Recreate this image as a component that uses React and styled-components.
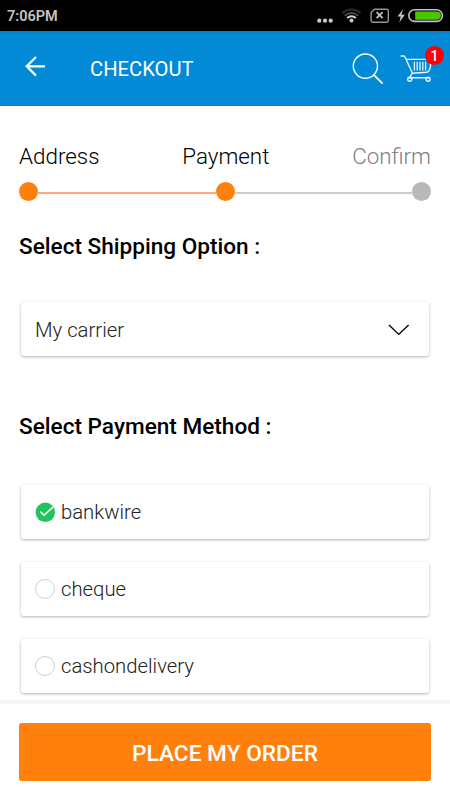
import React, { useState } from 'react';
import styled, { createGlobalStyle } from 'styled-components';

const steps = [
  { label: 'Address', reached: true },
  { label: 'Payment', reached: true },
  { label: 'Confirm', reached: false },
];

const methods = ['bankwire', 'cheque', 'cashondelivery'];

const StatusIcons = () => (
  <svg width="132" height="31" viewBox="312 0 132 31" fill="none">
    <g fill="#c8c8c8">
      <circle cx="319.3" cy="20.7" r="2.1" />
      <circle cx="325" cy="20.7" r="2.1" />
      <circle cx="330.7" cy="20.7" r="2.1" />
      <circle cx="351.5" cy="20.4" r="2" />
    </g>
    <path d="M342.4 13.2a13 13 0 0 1 18.2 0" stroke="#2c2c2c" strokeWidth="2.2" />
    <path d="M344.8 15.8a9.5 9.5 0 0 1 13.4 0" stroke="#484848" strokeWidth="2" />
    <path d="M347.2 18a6 6 0 0 1 8.6 0" stroke="#d0d0d0" strokeWidth="2" />
    <path
      d="M374.5 9.2h12.2a1.6 1.6 0 0 1 1.6 1.6v9.8a1.6 1.6 0 0 1-1.6 1.6h-14a1.6 1.6 0 0 1-1.6-1.6v-8z"
      stroke="#969696"
      strokeWidth="1.4"
    />
    <path d="M376.6 12.2l6 6M382.6 12.2l-6 6" stroke="#c0c0c0" strokeWidth="1.8" />
    <path d="M403 9.3l-5.5 7.3h3.2l-1.4 5.9 5.5-7.8h-3.4z" fill="#c4c4c4" />
    <rect x="408.8" y="9.8" width="33.6" height="11.6" rx="5.8" stroke="#c0c0c0" strokeWidth="1.6" />
    <path d="M415.2 11.5h21.6a4.1 4.1 0 0 1 0 8.2h-21.6z" fill="#4cc400" />
  </svg>
);

const BackIcon = () => (
  <svg width="24" height="24" viewBox="0 0 24 24" fill="none" stroke="#fff" strokeWidth="2.2">
    <path d="M22 12.3H3.6M13 3L3.7 12.3L13 21.6" />
  </svg>
);

const SearchIcon = () => (
  <svg width="32" height="32" viewBox="0 0 32 32" fill="none" stroke="#fff" strokeWidth="1.4">
    <circle cx="13.4" cy="13.1" r="12.1" />
    <path d="M21.8 21.8L30.6 30.6" strokeWidth="1.7" />
  </svg>
);

const CartIcon = () => (
  <svg width="34" height="32" viewBox="0 0 34 32" fill="none" stroke="#e8f4fc" strokeWidth="1.4">
    <path d="M0.6 3h2.9q1 0 1.5 1l7.4 16.2-2.9 4.6h20.6M5.9 6.4h24.6v7l-1.6 4.6-2 1.2-14.6 1" />
    <path d="M14.4 8.8v8.8M17.2 8.8v8.8M20 8.8v8.8M22.8 8.8v8.8M25.6 8.8v8.8" strokeWidth="1.3" />
    <circle cx="9.7" cy="26.3" r="2" />
    <circle cx="28.1" cy="26.3" r="2" />
  </svg>
);

const ChevronIcon = () => (
  <svg width="22" height="12" viewBox="0 0 22 12" fill="none" stroke="#000" strokeWidth="1.4">
    <path d="M1 1L10.8 10.4L20.6 1" />
  </svg>
);

const CheckIcon = () => (
  <svg width="20" height="20" viewBox="0 0 20 20" fill="none">
    <circle cx="10.3" cy="10.3" r="9.7" fill="#22c35e" />
    <path d="M5.4 9.6L9 13.2L18.2 4.9" stroke="#fff" strokeWidth="1.5" />
  </svg>
);

const App = () => {
  const [selected, setSelected] = useState('bankwire');

  return (
    <Screen>
      <GlobalStyle />
      <StatusBar>
        <Clock>7:06PM</Clock>
        <StatusIcons />
      </StatusBar>
      <AppBar>
        <BackButton aria-label="Back"><BackIcon /></BackButton>
        <Title>CHECKOUT</Title>
        <IconButton aria-label="Search"><SearchIcon /></IconButton>
        <CartButton aria-label="Cart">
          <CartIcon />
          <Badge>1</Badge>
        </CartButton>
      </AppBar>
      <Content>
        <StepLabels>
          {steps.map((step) => (
            <StepLabel key={step.label} $reached={step.reached}>{step.label}</StepLabel>
          ))}
        </StepLabels>
        <StepTrack>
          <Dot $reached />
          <Line $reached />
          <Dot $reached />
          <Line />
          <Dot />
        </StepTrack>
        <Heading>Select Shipping Option :</Heading>
        <CarrierSelect>
          <span>My carrier</span>
          <ChevronIcon />
        </CarrierSelect>
        <Heading $payment>Select Payment Method :</Heading>
        <MethodList>
          {methods.map((name) => (
            <Method key={name} onClick={() => setSelected(name)}>
              {selected === name ? <CheckIcon /> : <Radio />}
              <span>{name}</span>
            </Method>
          ))}
        </MethodList>
      </Content>
      <Footer>
        <OrderButton>PLACE MY ORDER</OrderButton>
      </Footer>
    </Screen>
  );
};

const GlobalStyle = createGlobalStyle`
  * {
    box-sizing: border-box;
  }
  body {
    margin: 0;
    font-family: Roboto, "Liberation Sans", sans-serif;
  }
  button {
    font-family: inherit;
  }
  svg {
    display: block;
    flex-shrink: 0;
  }
`;

const Screen = styled.div`
  display: flex;
  flex-direction: column;
  width: 450px;
  height: 800px;
  overflow: hidden;
  background: #fff;
`;

const StatusBar = styled.div`
  display: flex;
  align-items: center;
  justify-content: space-between;
  height: 31px;
  padding: 0 6px 0 7px;
  background: #000;
`;

const Clock = styled.span`
  padding-top: 2px;
  font-size: 14.5px;
  font-weight: 600;
  line-height: 29px;
  color: #c4c4c4;
`;

const AppBar = styled.header`
  display: flex;
  align-items: flex-start;
  height: 75px;
  padding: 22px 16px 0 23px;
  background: linear-gradient(#0580c8, #028ad7 4px);
  border-bottom: 1px solid #0580c8;
`;

const IconButton = styled.button`
  padding: 0;
  border: none;
  background: none;
  cursor: pointer;
`;

const BackButton = styled(IconButton)`
  margin-top: 1px;
`;

const Title = styled.h1`
  flex: 1;
  margin: 4px 0 0 43px;
  font-size: 20.2px;
  font-weight: 400;
  line-height: 24px;
  color: #fff;
`;

const CartButton = styled(IconButton)`
  position: relative;
  margin-left: 16px;
`;

const Badge = styled.span`
  position: absolute;
  top: -7px;
  right: -10px;
  width: 19px;
  height: 19px;
  border-radius: 50%;
  background: #fb0007;
  color: #fff;
  font-size: 14px;
  font-weight: 500;
  line-height: 20px;
  text-align: center;
`;

const Content = styled.main`
  height: 594px;
  padding: 36px 19px 0;
`;

const StepLabels = styled.div`
  display: flex;
  justify-content: space-between;
`;

const StepLabel = styled.span`
  font-size: 22.4px;
  font-weight: 300;
  line-height: 28px;
  color: ${(props) => (props.$reached ? '#000' : '#808080')};
`;

const StepTrack = styled.div`
  display: flex;
  align-items: center;
  margin-top: 12px;
`;

const Dot = styled.span`
  width: 19px;
  height: 19px;
  border-radius: 50%;
  background: ${(props) => (props.$reached ? '#ff800d' : '#b9b9b9')};
`;

const Line = styled.span`
  flex: 1;
  height: 2px;
  margin-top: 2px;
  background: ${(props) => (props.$reached ? '#ffa883' : '#cdcdcd')};
`;

const Heading = styled.h2`
  margin: ${(props) => (props.$payment ? '57px' : '32px')} 0 0;
  font-size: 22.6px;
  font-weight: 500;
  line-height: 28px;
  color: #000;
`;

const Card = styled.div`
  display: flex;
  align-items: center;
  height: 54px;
  margin: 0 2px;
  padding: 0 14px;
  border-radius: 3px;
  background: #fff;
  box-shadow: 0 1px 3px rgba(0, 0, 0, 0.3);
  font-size: 20.3px;
  font-weight: 300;
  color: #222;
  cursor: pointer;
`;

const CarrierSelect = styled(Card)`
  justify-content: space-between;
  margin-top: 41px;
  padding: 1px 19px 0 14px;
`;

const MethodList = styled.div`
  display: flex;
  flex-direction: column;
  gap: 23px;
  margin-top: 44px;
`;

const Method = styled(Card)`
  gap: 6px;
`;

const Radio = styled.span`
  width: 20px;
  height: 20px;
  border: 1px solid #cfcfcf;
  border-radius: 50%;
`;

const Footer = styled.footer`
  flex: 1;
  padding: 19px 19px 0;
  border-top: 4px solid #f5f5f5;
`;

const OrderButton = styled.button`
  display: block;
  width: 100%;
  height: 58px;
  padding: 2px 0 0;
  border: none;
  border-radius: 3px;
  background: #ff800d;
  color: #fff;
  font-size: 22.7px;
  font-weight: 500;
  cursor: pointer;
`;

export default App;
